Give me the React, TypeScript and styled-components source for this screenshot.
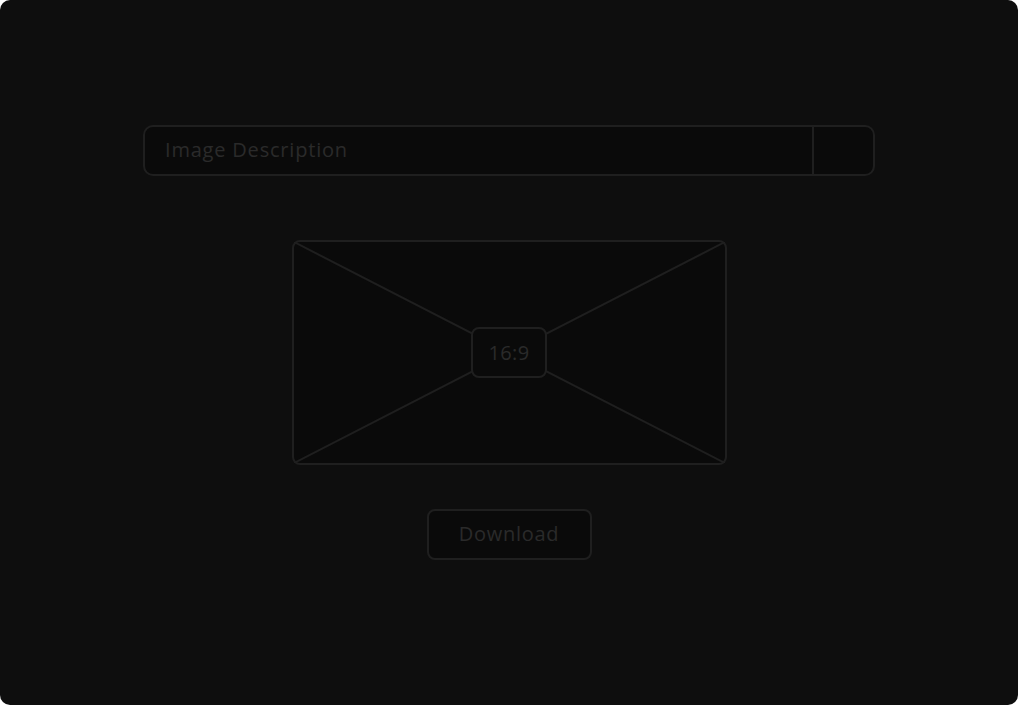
import React from "react";
import styled, { createGlobalStyle } from "styled-components";

const Global = createGlobalStyle`
  html, body { margin: 0; padding: 0; background: #ffffff; }
  body { font-family: "Open Sans", "Liberation Sans", sans-serif; }
  * { box-sizing: border-box; }
`;

const Frame = styled.div`
  width: 1018px;
  height: 705px;
  background: #0e0e0e;
  border-radius: 10px;
  display: flex;
  flex-direction: column;
  align-items: center;
  padding-top: 125px;
`;

const SearchBar = styled.div`
  width: 732px;
  height: 51px;
  display: flex;
  background: #0a0a0a;
  border: 2px solid #1f1f1f;
  border-radius: 10px;
  overflow: hidden;
`;

const SearchInput = styled.input`
  flex: 1;
  height: 100%;
  background: transparent;
  border: none;
  outline: none;
  padding: 0 0 2px 20px;
  font-family: "Open Sans", "Liberation Sans", sans-serif;
  font-size: 20px;
  letter-spacing: 0.8px;
  color: #2a2a2a;
  &::placeholder { color: #2a2a2a; }
`;

const SearchAction = styled.div`
  width: 61px;
  height: 100%;
  border-left: 2px solid #1f1f1f;
`;

const Preview = styled.div`
  position: relative;
  margin-top: 64px;
  width: 435px;
  height: 225px;
  background: #0a0a0a;
  border: 2px solid #1f1f1f;
  border-radius: 8px;
  display: flex;
  align-items: center;
  justify-content: center;
`;

const Lines = styled.svg`
  position: absolute;
  inset: 0;
  width: 100%;
  height: 100%;
`;

const Ratio = styled.div`
  position: relative;
  width: 76px;
  height: 51px;
  background: #0a0a0a;
  border: 2px solid #1f1f1f;
  border-radius: 8px;
  display: flex;
  align-items: center;
  justify-content: center;
  font-size: 20px;
  letter-spacing: 0.4px;
  color: #2a2a2a;
  padding-bottom: 1px;
`;

const DownloadButton = styled.button`
  margin-top: 44px;
  width: 165px;
  height: 51px;
  background: #0a0a0a;
  border: 2px solid #1f1f1f;
  border-radius: 8px;
  font-family: "Open Sans", "Liberation Sans", sans-serif;
  font-size: 20px;
  letter-spacing: 0.7px;
  color: #2a2a2a;
  padding: 0 0 2px;
`;

export default function App() {
  return (
    <>
      <Global />
      <Frame>
        <SearchBar>
          <SearchInput placeholder="Image Description" />
          <SearchAction />
        </SearchBar>
        <Preview>
          <Lines viewBox="0 0 431 221" preserveAspectRatio="none">
            <line x1="0" y1="0" x2="431" y2="221" stroke="#1f1f1f" strokeWidth="2" />
            <line x1="431" y1="0" x2="0" y2="221" stroke="#1f1f1f" strokeWidth="2" />
          </Lines>
          <Ratio>16:9</Ratio>
        </Preview>
        <DownloadButton>Download</DownloadButton>
      </Frame>
    </>
  );
}
